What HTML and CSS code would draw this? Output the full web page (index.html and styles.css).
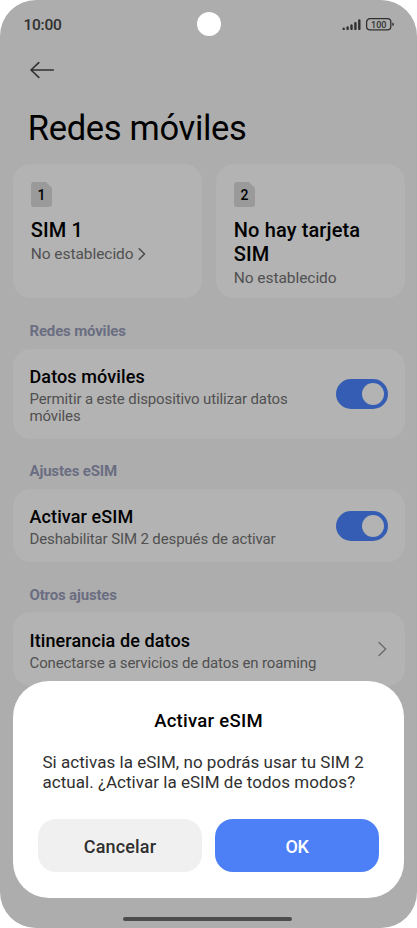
FILE: index.html
```
<!DOCTYPE html>
<html lang="es">
<head>
<meta charset="utf-8">
<title>Redes móviles</title>
<link rel="stylesheet" href="styles.css">
</head>
<body>
<div class="screen">
  <header class="status">
    <span class="clock">10:00</span>
    <span class="camera"></span>
    <svg class="indicators" width="54" height="14" viewBox="0 0 54 14">
      <g stroke="#303030" stroke-width="2.4" stroke-linecap="round">
        <path d="M2.700 11.700v.2M6.600 10.500v1.400M10.500 8.500v3.400M14.400 6.100v5.800M18.300 3.400v8.500"/>
      </g>
      <rect x="25.600" y="1.700" width="24.200" height="11.200" rx="3.400" fill="none" stroke="#303030" stroke-width="1.300"/>
      <path d="M51.300 5.500q1.500 .3 1.500 1.800t-1.500 1.800z" fill="#303030"/>
      <text x="37.800" y="10.700" class="charge">100</text>
    </svg>
  </header>
  <nav class="back">
    <svg width="26" height="20" viewBox="0 0 26 20"><path d="M24.300 10H2.200M9.800 2.600L2 10l7.800 7.400" fill="none" stroke="#303030" stroke-width="1.600" stroke-linecap="round" stroke-linejoin="round"/></svg>
  </nav>
  <h1>Redes móviles</h1>

  <section class="sims">
    <article class="card sim">
      <div class="chip">1</div>
      <h2>SIM 1</h2>
      <p>No establecido <svg class="more" width="9" height="14" viewBox="0 0 9 14"><path d="M2.200 1.700L7.500 7l-5.300 5.300" fill="none" stroke="#4c4c4c" stroke-width="1.500" stroke-linecap="round"/></svg></p>
    </article>
    <article class="card sim">
      <div class="chip">2</div>
      <h2>No hay tarjeta SIM</h2>
      <p>No establecido</p>
    </article>
  </section>

  <h3>Redes móviles</h3>
  <article class="card row tall">
    <div class="label"><h4>Datos móviles</h4><p>Permitir a este dispositivo utilizar datos móviles</p></div>
    <span class="switch"></span>
  </article>

  <h3>Ajustes eSIM</h3>
  <article class="card row">
    <div class="label"><h4>Activar eSIM</h4><p>Deshabilitar SIM 2 después de activar</p></div>
    <span class="switch"></span>
  </article>

  <h3>Otros ajustes</h3>
  <article class="card row">
    <div class="label"><h4>Itinerancia de datos</h4><p>Conectarse a servicios de datos en roaming</p></div>
    <svg class="go" width="11" height="18" viewBox="0 0 11 18"><path d="M2 2.500L8.700 9 2 15.500" fill="none" stroke="#686868" stroke-width="1.300" stroke-linecap="round"/></svg>
  </article>

  <div class="dialog">
    <h2>Activar eSIM</h2>
    <p>Si activas la eSIM, no podrás usar tu SIM 2 actual. ¿Activar la eSIM de todos modos?</p>
    <div class="actions">
      <button class="cancel">Cancelar</button>
      <button class="ok">OK</button>
    </div>
  </div>
  <div class="home"></div>
</div>
</body>
</html>
```
FILE: styles.css
```
* { box-sizing: border-box; margin: 0; padding: 0; }
body { background: #fff; font-family: Roboto, sans-serif; color: #000; }
.screen { position: relative; width: 417px; height: 928px; border-radius: 36px; background: #adadad; overflow: hidden; padding: 0 12.500px; }
.status { display: grid; grid-template-columns: 1fr 24px 1fr; align-items: center; height: 48px; padding: 0 9.500px 0 11px; }
.clock { font-size: 15.500px; font-weight: 500; color: #303030; letter-spacing: -.25px; line-height: 20px; padding-top: 1px; }
.camera { width: 24px; height: 24px; border-radius: 50%; background: #fff; margin-left: -.5px; }
.indicators { justify-self: end; }
.charge { font-size: 9px; font-weight: 500; fill: #303030; text-anchor: middle; }
.back { height: 44px; padding: 12px 0 0 16.500px; }
.back svg { display: block; }
h1 { height: 72px; padding: 16px 0 0 15.300px; font-size: 34.500px; line-height: 40px; font-weight: 400; letter-spacing: -.33px; }
.card { background: #b3b3b3; border-radius: 18px; }
.sims { display: grid; grid-template-columns: 1fr 1fr; gap: 14px; margin-bottom: 1.300px; }
.sim { height: 134px; padding: 18px 18px 0 18.300px; }
.chip { width: 21.500px; height: 25px; border-radius: 3px; background: #9a9a9a; clip-path: polygon(0 0, 70% 0, 100% 25%, 100% 100%, 0 100%); font-size: 14px; font-weight: 500; line-height: 26px; text-align: center; }
.sim h2 { font-size: 20px; line-height: 23.700px; font-weight: 500; margin-top: 12.400px; letter-spacing: .12px; }
.sim p { font-size: 15.500px; line-height: 23.500px; color: #505050; white-space: nowrap; letter-spacing: -.06px; }
.more { vertical-align: -2px; }
h3 { height: 49.800px; padding: 22.200px 0 0 17px; font-size: 15px; line-height: 20px; font-weight: 700; color: #6b6d82; letter-spacing: -.17px; }
.row { display: flex; justify-content: space-between; align-items: center; height: 73.600px; padding: 0 16.500px 0 17px; }
.row.tall { height: 90px; }
.label { width: 300px; padding-top: 2.500px; }
.tall .label { width: 290px; }
h4 { font-size: 18px; line-height: 24px; font-weight: 500; letter-spacing: .1px; }
.row p { font-size: 15px; line-height: 17px; color: #505050; padding-top: 2px; letter-spacing: -.12px; }
.switch { width: 52px; height: 30px; border-radius: 15px; background: #355db3; padding: 4px; display: flex; justify-content: flex-end; }
.switch::after { content: ""; width: 22px; height: 22px; border-radius: 50%; background: #b3b3b3; }
.dialog { position: absolute; left: 13px; top: 681px; width: 391px; height: 216.500px; border-radius: 36px; background: #fff; padding: 27.500px 25px 0; }
.dialog h2 { font-size: 18.500px; line-height: 24px; font-weight: 500; text-align: center; letter-spacing: .27px; }
.dialog p { font-size: 17px; line-height: 20.700px; color: #303030; margin: 19px 0 26.100px 4.500px; width: 335px; letter-spacing: .03px; }
.actions { display: grid; grid-template-columns: 1fr 1fr; gap: 13px; }
button { height: 53px; border: 0; border-radius: 18px; font: 500 18px/54px Roboto, sans-serif; letter-spacing: .15px; padding-top: 1px; }
.cancel { background: #f0f0f0; color: #303030; }
.ok { background: #4d80f6; color: #fff; letter-spacing: -.4px; }
.home { position: absolute; left: 123px; top: 917px; width: 169px; height: 4px; border-radius: 2px; background: #4c4c4c; }
```
